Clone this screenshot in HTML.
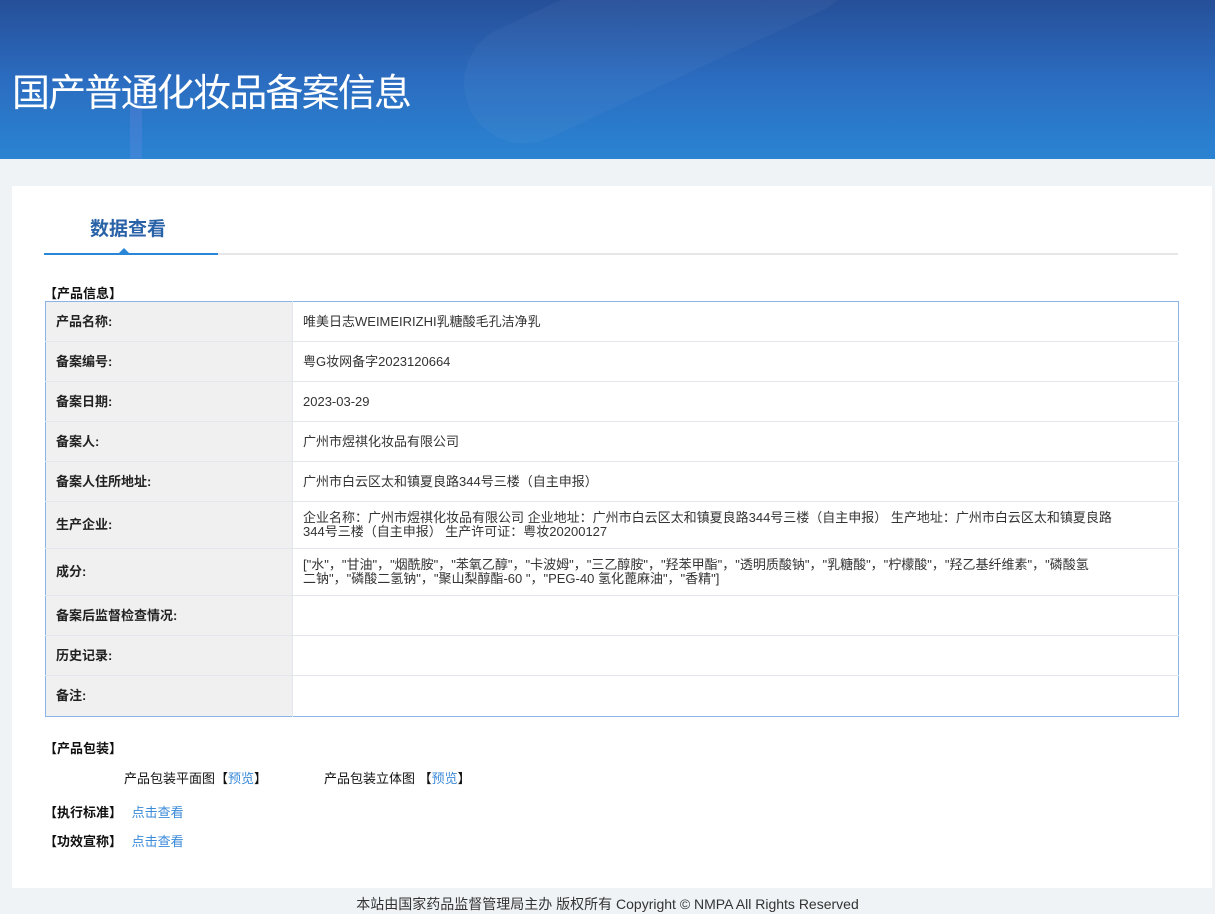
<!DOCTYPE html>
<html><head><meta charset="utf-8"><style>
body{margin:0;width:1215px;height:912px;overflow:hidden;background:#eff3f6;font-family:"Liberation Sans","Noto Sans CJK SC",sans-serif;font-size:13px;color:#333;position:relative}
.hd{position:absolute;left:0;top:0;width:1215px;height:159px;background:linear-gradient(180deg,#264f98 0%,#2b6cc0 50%,#2a84d2 100%);overflow:hidden}
.hd h1{position:absolute;left:12px;top:62px;margin:0;font-weight:normal;font-size:38px;color:#fff;letter-spacing:-1.8px}
.box{position:absolute;left:12px;top:186px;width:1200px;height:702px;background:#fff}
.tab{position:absolute;left:78px;top:28px;font-size:19px;font-weight:bold;color:#2a62a8}
.ln{position:absolute;left:32px;top:67px;width:1134px;height:2px;background:#e6e6e6}
.ln b{position:absolute;left:0;top:0;width:174px;height:2px;background:#2a86d6}
.tri{position:absolute;left:106px;top:62px;width:0;height:0;border-left:6px solid transparent;border-right:6px solid transparent;border-bottom:6px solid #2a86d6}
.sec{position:absolute;font-weight:bold;color:#111;font-size:13px}
table{position:absolute;left:33px;top:115px;width:1134px;border-collapse:collapse;border:1px solid #8ab4e8}
td{border-bottom:1px solid #e3e6ea;padding:0 10px;height:39px;font-size:13px;line-height:14px}
td.l{width:226px;background:#f0f0f0;font-weight:bold;color:#222;border-right:1px solid #e3e6ea}
td.v{color:#333}
a{color:#3a8ad8;text-decoration:none}
.ft{position:absolute;left:0;width:1215px;top:894px;text-align:center;font-size:14px;color:#333}
</style></head><body>
<div class="hd">
<div style="position:absolute;left:130px;top:100px;width:12px;height:59px;background:rgba(120,140,230,.25)"></div>
<div style="position:absolute;left:450px;top:-40px;width:420px;height:120px;border-radius:60px;background:rgba(255,255,255,.035);transform:rotate(-25deg)"></div>
<h1>国产普通化妆品备案信息</h1></div>
<div class="box">
<div class="tab">数据查看</div>
<div class="ln"><b></b></div><div class="tri"></div>
<div class="sec" style="left:32px;top:97px">【产品信息】</div>
<table>
<tr><td class="l">产品名称:</td><td class="v">唯美日志WEIMEIRIZHI乳糖酸毛孔洁净乳</td></tr>
<tr><td class="l">备案编号:</td><td class="v">粤G妆网备字2023120664</td></tr>
<tr><td class="l">备案日期:</td><td class="v">2023-03-29</td></tr>
<tr><td class="l">备案人:</td><td class="v">广州市煜祺化妆品有限公司</td></tr>
<tr><td class="l">备案人住所地址:</td><td class="v">广州市白云区太和镇夏良路344号三楼（自主申报）</td></tr>
<tr><td class="l" style="height:46px">生产企业:</td><td class="v">企业名称：广州市煜祺化妆品有限公司 企业地址：广州市白云区太和镇夏良路344号三楼（自主申报） 生产地址：广州市白云区太和镇夏良路<br>344号三楼（自主申报） 生产许可证：粤妆20200127</td></tr>
<tr><td class="l" style="height:46px">成分:</td><td class="v">["水"，"甘油"，"烟酰胺"，"苯氧乙醇"，"卡波姆"，"三乙醇胺"，"羟苯甲酯"，"透明质酸钠"，"乳糖酸"，"柠檬酸"，"羟乙基纤维素"，"磷酸氢<br>二钠"，"磷酸二氢钠"，"聚山梨醇酯-60 "，"PEG-40 氢化蓖麻油"，"香精"]</td></tr>
<tr><td class="l">备案后监督检查情况:</td><td class="v"></td></tr>
<tr><td class="l">历史记录:</td><td class="v"></td></tr>
<tr><td class="l" style="border-bottom:0;height:40px">备注:</td><td class="v" style="border-bottom:0"></td></tr>
</table>
<div class="sec" style="left:32px;top:552px">【产品包装】</div>
<div style="position:absolute;left:112px;top:582px;color:#111">产品包装平面图【<a>预览</a>】</div>
<div style="position:absolute;left:312px;top:582px;color:#111">产品包装立体图 【<a>预览</a>】</div>
<div class="sec" style="left:32px;top:616px">【执行标准】 <a style="font-weight:normal;margin-left:6px">点击查看</a></div>
<div class="sec" style="left:32px;top:645px">【功效宣称】 <a style="font-weight:normal;margin-left:6px">点击查看</a></div>
</div>
<div class="ft">本站由国家药品监督管理局主办 版权所有 Copyright © NMPA All Rights Reserved</div>
</body></html>
